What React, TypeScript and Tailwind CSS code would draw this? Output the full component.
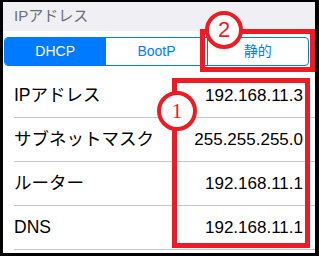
const rows = [
  { label: "IPアドレス", value: "192.168.11.3" },
  { label: "サブネットマスク", value: "255.255.255.0" },
  { label: "ルーター", value: "192.168.11.1" },
  { label: "DNS", value: "192.168.11.1" },
];

const font = { fontFamily: '"Liberation Sans", "Noto Sans CJK JP", sans-serif' };

export default function App() {
  return (
    <div className="w-[319px] h-[256px] bg-black pl-[3px] pt-[2px] pr-[4px] pb-[3px]" style={font}>
      <div className="relative h-full bg-white overflow-hidden">
        {/* Header */}
        <div className="h-[29px] bg-[#efeff4] pl-[11px] flex items-center text-[15px] text-[#6d6d72]">
          IPアドレス
        </div>

        {/* Segmented control */}
        <div className="mt-[6px] ml-[1px] w-[305px] h-[29px] flex border border-[#007aff] rounded-[4px] overflow-hidden text-[14px]">
          <div className="flex-1 bg-[#007aff] text-white flex items-center justify-center">DHCP</div>
          <div className="flex-1 text-[#007aff] flex items-center justify-center border-l border-[#007aff]">BootP</div>
          <div className="flex-1 text-[#007aff] flex items-center justify-center border-l border-[#007aff]">静的</div>
        </div>

        {/* Rows */}
        <div className="mt-[8px] pl-[11px]">
          {rows.map((r) => (
            <div key={r.label} className="h-[44px] flex items-center justify-between pr-[12px] border-b border-[#c8c7cc] text-[17px] text-black">
              <span className="text-[17.5px]">{r.label}</span>
              <span>{r.value}</span>
            </div>
          ))}
        </div>

        {/* Annotations */}
        <div className="absolute left-[197px] top-[27px] w-[115px] h-[43px] border-[5px] border-[#ed1c24]" />
        <div className="absolute left-[169px] top-[76px] w-[138px] h-[170px] border-[5px] border-[#ed1c24]" />
        <div className="absolute left-[202px] top-[9px] w-[38px] h-[38px] rounded-full border-[4px] border-[#ed1c24] bg-white flex items-center justify-center text-[22px] leading-none text-[#ed1c24]">
          2
        </div>
        <div className="absolute left-[154px] top-[89px] w-[40px] h-[40px] rounded-full border-[4px] border-[#ed1c24] bg-white flex items-center justify-center text-[22px] leading-none text-[#ed1c24]" style={{ fontFamily: '"Liberation Serif", serif' }}>
          1
        </div>
      </div>
    </div>
  );
}
